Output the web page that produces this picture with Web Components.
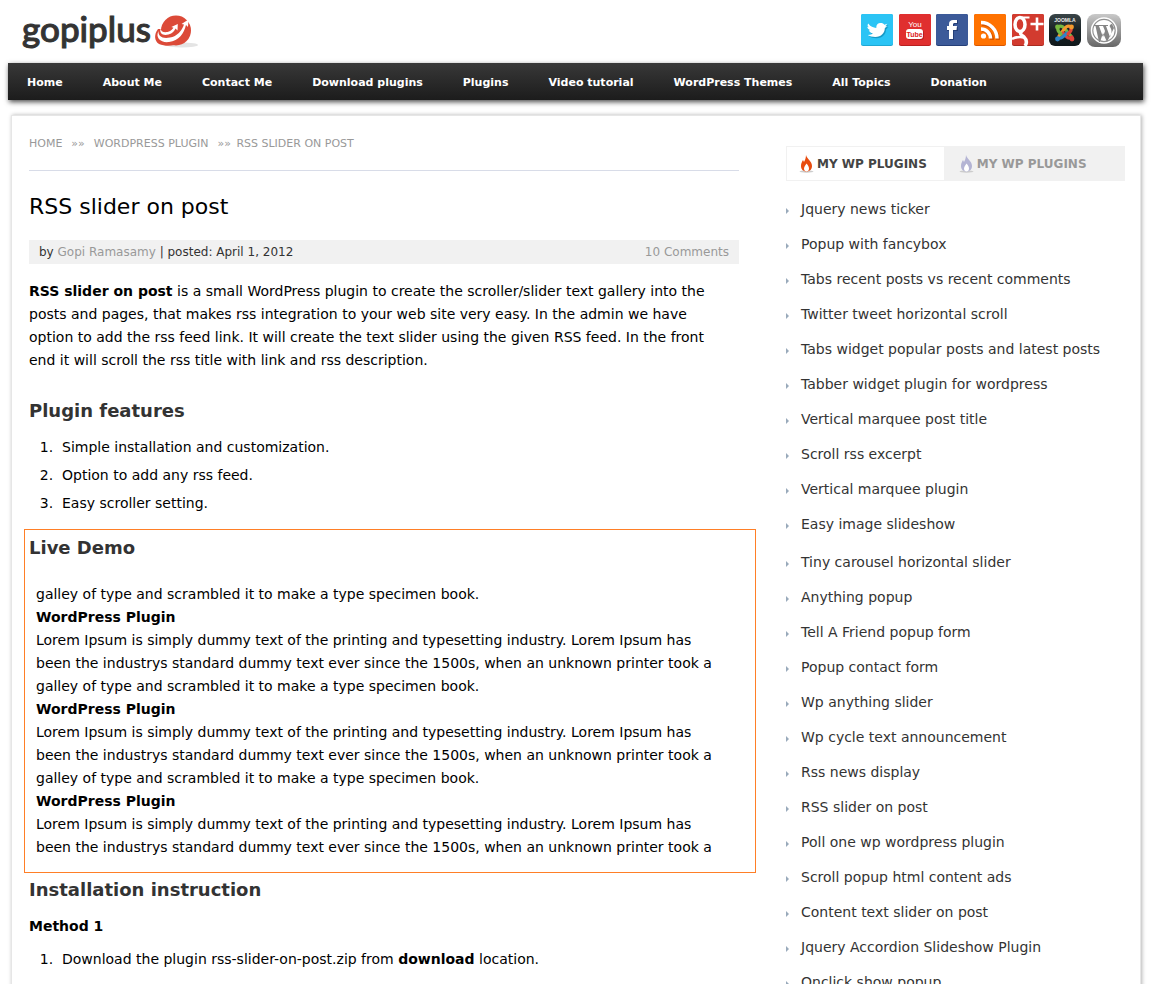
<!DOCTYPE html>
<html lang="en">
<head>
<meta charset="utf-8">
<title>RSS slider on post</title>
<style>
html{height:100%;overflow:hidden;background:#fff}
body{margin:0;height:100%;overflow:hidden;color:#000;font:14px/23px "DejaVu Sans",Verdana,sans-serif}
</style>
</head>
<body>
<gopi-page>
  <gopi-header slot="header"></gopi-header>
  <gopi-nav slot="nav"></gopi-nav>
  <gopi-article slot="main"></gopi-article>
  <gopi-sidebar slot="side"></gopi-sidebar>
</gopi-page>
<script>
function define(name, html) {
  const t = document.createElement('template');
  t.innerHTML = html;
  customElements.define(name, class extends HTMLElement {
    constructor() {
      super();
      this.attachShadow({mode: 'open'}).append(t.content.cloneNode(true));
      if (this.shadowRoot.querySelector('[data-items]')) this.fill();
    }
    fill() {
      for (const ul of this.shadowRoot.querySelectorAll('[data-items]')) {
        for (const s of ul.dataset.items.split('|')) {
          const li = document.createElement('li');
          const a = document.createElement('a');
          a.href = '#';
          a.textContent = s;
          li.append(a);
          ul.append(li);
        }
      }
    }
  });
}

define('gopi-page', `
<style>
:host{display:block;padding:0 10px 0 8px}
.card{margin:15px 2px 0 3px;min-height:900px;padding:0 15px 0 17px;border:1px solid #e6e6e6;border-bottom:0;box-shadow:1px 0 4px rgba(0,0,0,.3);
  display:grid;grid-template-columns:minmax(0,1fr) 339px;gap:47px;align-items:start;background:#fff}
</style>
<slot name="header"></slot><slot name="nav"></slot>
<div class="card"><slot name="main"></slot><slot name="side"></slot></div>`);

define('gopi-header', `
<style>
:host{display:flex;justify-content:space-between;align-items:flex-start;height:63px;box-sizing:border-box;padding:12px 22px 0 14px}
.logo{display:flex;align-items:flex-start;color:#333;text-decoration:none;font:500 35px/32px Lato,sans-serif;-webkit-text-stroke:1px #333}
.logo svg{display:block;margin-left:3px}
nav{display:flex;justify-content:space-between;width:260px;padding-top:2px}
nav a,nav svg{display:block}
</style>
<a class="logo" href="#"><span>gopiplus</span><svg width="46" height="38" viewBox="0 0 46 38">
<ellipse cx="28" cy="33" rx="16" ry="2.4" fill="#e4e4e4"/>
<circle cx="22" cy="18.500" r="15" fill="#dc4a38"/>
<path d="M4 17C0 22 0 29 5 32c7 3 15 2 21-1L9 17z" fill="#dc4a38"/>
<path d="M4.500 19C1 26 7 31 15 30c10-1 15-9 17-17l2 2 .5-7.500-7 4.500 2.500.5c-2 6-7 12-14 13C8 27 4 24 4.500 19z" fill="#fff"/>
<path d="M6.500 16c-1.500 6 3 8 8 6.500 4-1 6-4 7-6l2 2 .3-6.500-6.500 3 2.200.8c-2 3-4 3.800-6 4.200-4 .6-7-.5-7-4z" fill="#fff"/>
</svg></a>
<nav aria-label="Social">
<a href="#" aria-label="Twitter"><svg width="32" height="32" viewBox="0 0 32 32"><rect width="32" height="32" rx="2" fill="#1fa8d4"/><rect width="32" height="31" rx="2" fill="#2bc4f5"/><path id="t" d="M8 9.500c2 3 5 4 8 4.500 0-4 2-5 4.500-5 1.500 0 3 .7 3.500 1.700l3-1-2 2.500 2-.4-2.500 2.500C24.500 19 21 23 15 23c-3 0-6-.8-7.500-2 3 0 4-.8 5-1.700-2 0-3.500-1.500-4-3H10c-2-1-3-2-3-3.500l1.500.5C7 12 7 11 8 9.500z" fill="#1799c5" transform="translate(.5 1.300)"/><path d="M8 9.500c2 3 5 4 8 4.500 0-4 2-5 4.500-5 1.500 0 3 .7 3.500 1.700l3-1-2 2.500 2-.4-2.500 2.500C24.500 19 21 23 15 23c-3 0-6-.8-7.500-2 3 0 4-.8 5-1.700-2 0-3.500-1.500-4-3H10c-2-1-3-2-3-3.500l1.500.5C7 12 7 11 8 9.500z" fill="#fff" transform="translate(-.7 0)"/></svg></a>
<a href="#" aria-label="YouTube"><svg width="32" height="32" viewBox="0 0 32 32"><rect width="32" height="32" rx="2" fill="#b91f1f"/><rect width="32" height="31" rx="2" fill="#e02f2f"/><text x="16" y="13" text-anchor="middle" font-family="Liberation Sans" font-size="8" fill="#fff">You</text><rect x="8" y="16" width="17" height="10" rx="3" fill="#b91f1f"/><rect x="7" y="15" width="17" height="10" rx="3" fill="#fff"/><text x="15.500" y="23" text-anchor="middle" font-family="Liberation Sans" font-size="7" font-weight="700" fill="#d22">Tube</text></svg></a>
<a href="#" aria-label="Facebook"><svg width="32" height="32" viewBox="0 0 32 32"><rect width="32" height="32" rx="2" fill="#253f78"/><rect width="32" height="31" rx="2" fill="#3c5a99"/><path d="M14 26V17h-3v-4h3v-2c0-3 2-5 5-5h3v4h-2c-1.500 0-2 .5-2 1.500V13h4v4h-4v9z" fill="#253f78"/><path d="M13 25V16h-2v-4h2v-2c0-3 2-4 4-4h4v3h-2c-1.500 0-2 .5-2 1.500V12h4l-.5 4H17v9z" fill="#fff"/></svg></a>
<a href="#" aria-label="RSS"><svg width="32" height="32" viewBox="0 0 32 32"><rect width="32" height="32" rx="2" fill="#d95700"/><rect width="32" height="31" rx="2" fill="#ff7200"/><g fill="none" stroke="#d95700" stroke-width="4" transform="translate(1 1)"><path d="M7 15a10 10 0 0 1 10 10M7 9a16 16 0 0 1 16 16"/></g><g fill="none" stroke="#fff" stroke-width="3.500"><path d="M7 15a9.500 9.500 0 0 1 9.500 9.500M7 8.500a16 16 0 0 1 16 16"/></g><circle cx="9.500" cy="22" r="2.600" fill="#fff"/></svg></a>
<a href="#" aria-label="Google Plus"><svg width="32" height="32" viewBox="0 0 32 32"><rect width="32" height="32" rx="2" fill="#aa2b20"/><rect width="32" height="31" rx="2" fill="#d23b2f"/><g fill="none" stroke="#fff"><ellipse cx="8" cy="10.500" rx="5" ry="7" stroke-width="3.500"/><path d="M8 3.500h9.500" stroke-width="2"/><path d="M9 17.500c-2 3 1 3.500 3 5.500 3 3 3 6 1 9" stroke-width="3.500"/><path d="M0 25c4-2 8-2.500 12-1.500" stroke-width="2.500"/><path d="M25 3.500v13M18.500 10h13" stroke-width="2.600"/></g></svg></a>
<a href="#" aria-label="Joomla"><svg width="32" height="32" viewBox="0 0 32 32"><defs><linearGradient id="j" x2="0" y2="1"><stop stop-color="#3a4548"/><stop offset=".5" stop-color="#182124"/><stop offset="1" stop-color="#10181b"/></linearGradient></defs><rect width="32" height="32" rx="6" fill="url(#j)"/><text x="16" y="8" text-anchor="middle" font-family="Liberation Sans" font-size="5" font-weight="700" fill="#eee">JOOMLA</text><g fill="none" stroke-width="3.200" stroke-linecap="round"><path d="M9 13c4-3 6 1 13 9" stroke="#76b83f"/><path d="M22 13c-4-3-6 1-12 9" stroke="#f39a2d"/><path d="M23 23c-4 3-6-1-9-4" stroke="#e0453a"/><path d="M9 24c3 1 5-1 9-5" stroke="#2f84c8"/><path d="M9 14c-1 3 1 4 3 6" stroke="#76b83f"/><path d="M22 14c1 3-1 4-3 6" stroke="#e0453a"/></g><circle cx="8.500" cy="13" r="2.400" fill="#76b83f"/><circle cx="22.500" cy="13" r="2.400" fill="#f39a2d"/><circle cx="8.500" cy="25" r="2.400" fill="#2f84c8"/><circle cx="23" cy="25" r="2.400" fill="#e0453a"/></svg></a>
<a href="#" aria-label="WordPress"><svg width="34" height="33" viewBox="0 0 34 33"><defs><linearGradient id="w" x2="0" y2="1"><stop stop-color="#c9c9c9"/><stop offset="1" stop-color="#666"/></linearGradient></defs><rect width="34" height="33" rx="8" fill="url(#w)"/><circle cx="17" cy="16.500" r="12.500" fill="#909090" stroke="#fff" stroke-width="1.500"/><circle cx="17" cy="16.500" r="10.600" fill="#fff"/><path d="M7 11h7v1h-2l4 11 2-6-2-5h-2v-1h7v1h-2l4 11c2-5 2-7 0-10-1-2 1-3 2-3l2 4-7 14-4-9-3 9h-1L8.500 12H7z" fill="#858585"/></svg></a>
</nav>`);

define('gopi-nav', `
<style>
:host{display:block;background:linear-gradient(#383838,#1c1c1c);box-shadow:1px 2px 5px rgba(0,0,0,.7)}
ul{display:flex;gap:40px;margin:0;padding:2px 19px 0;list-style:none;height:35px;align-items:center}
a{display:block;color:#fff;text-decoration:none;font-weight:700;font-size:11px;white-space:nowrap}
</style>
<nav><ul data-items="Home|About Me|Contact Me|Download plugins|Plugins|Video tutorial|WordPress Themes|All Topics|Donation"></ul></nav>`);

define('gopi-article', `
<style>
:host{display:block;min-width:0}
a{color:#999;text-decoration:none}
.crumbs{display:flex;gap:2px;height:54px;align-items:center;border-bottom:1px solid #d8dce8;font-size:11px;color:#999;text-transform:uppercase;white-space:pre}
h1{margin:24px 0 21px;font-weight:400;font-size:22px;line-height:24px}
.meta{display:flex;justify-content:space-between;padding:1px 10px 0;background:#f1f1f1;font-size:12px;color:#333}
p{margin:0}
.intro{margin:16px 16px 27px 0}
h2{margin:0;font-size:18px;line-height:24px;color:#333}
h3{margin:12px 0 7px;font-size:14px;line-height:24px}
ol{margin:0;padding:0 0 0 33px;line-height:28px}
li::marker{content:counter(list-item) ".\\00a0\\00a0"}
.features{margin:10px 0 12px}
</style>
<div class="crumbs"><a href="#">Home</a><span>  »»  </span><a href="#">WordPress Plugin</a><span>  »» </span><span>RSS slider on post</span></div>
<h1>RSS slider on post</h1>
<div class="meta"><span>by <a href="#">Gopi Ramasamy</a> | posted: April 1, 2012</span><a href="#">10 Comments</a></div>
<p class="intro"><b>RSS slider on post</b> is a small WordPress plugin to create the scroller/slider text gallery into the posts and pages, that makes rss integration to your web site very easy. In the admin we have option to add the rss feed link. It will create the text slider using the given RSS feed. In the front end it will scroll the rss title with link and rss description.</p>
<h2>Plugin features</h2>
<ol class="features"><li>Simple installation and customization.</li><li>Option to add any rss feed.</li><li>Easy scroller setting.</li></ol>
<gopi-demo><h2>Live Demo</h2></gopi-demo>
<h2>Installation instruction</h2>
<h3>Method 1</h3>
<ol><li>Download the plugin rss-slider-on-post.zip from <b>download</b> location.</li></ol>`);

define('gopi-demo', `
<style>
:host{display:block;border:1px solid #ff7f27;margin:0 -17px 5px -5px;padding:6px 4px 13px}
.feed{padding:23px 24px 0 7px}
p{margin:0}
</style>
<slot></slot>
<div class="feed">
<p>galley of type and scrambled it to make a type specimen book.</p>
<b>WordPress Plugin</b>
<p>Lorem Ipsum is simply dummy text of the printing and typesetting industry. Lorem Ipsum has been the industrys standard dummy text ever since the 1500s, when an unknown printer took a galley of type and scrambled it to make a type specimen book.</p>
<b>WordPress Plugin</b>
<p>Lorem Ipsum is simply dummy text of the printing and typesetting industry. Lorem Ipsum has been the industrys standard dummy text ever since the 1500s, when an unknown printer took a galley of type and scrambled it to make a type specimen book.</p>
<b>WordPress Plugin</b>
<p>Lorem Ipsum is simply dummy text of the printing and typesetting industry. Lorem Ipsum has been the industrys standard dummy text ever since the 1500s, when an unknown printer took a</p>
</div>`);

define('gopi-flame', `
<style>:host{display:block;color:#e84c0f}svg{display:block}</style>
<svg width="16" height="18" viewBox="0 0 16 18"><ellipse cx="7.500" cy="16.500" rx="7" ry="1.200" fill="#ccc"/><path d="M7 0c1 4 6 6 6 11 0 3-2 5.500-5.500 5.500S2 14 2 11c0-3 1-4 2-6l1 2c1-2 2-4 2-7z" fill="currentColor"/><path d="M7.500 8.500c1.500 2 2.500 3 2.500 5s-1 3-2.500 3S5 15.500 5 13.500s1.500-3 2.500-5z" fill="#fff"/></svg>`);

define('gopi-sidebar', `
<style>
:host{display:block;padding-top:30px}
.tabs{display:flex;border:1px solid #f1f1f1;background:#f1f1f1;height:33px}
button{display:flex;align-items:center;gap:2px;border:0;margin:0;padding:0 17px 0 12px;background:#fff;color:#444;font:bold 12px/20px "DejaVu Sans",Verdana,sans-serif}
button.off{background:none;color:#999;padding-left:15px}
.off gopi-flame{color:#b4b4d4}
ul{list-style:none;margin:11px 0 0;padding:0}
ul+ul{margin-top:3px}
li{display:flex;align-items:center;gap:12px;height:35px}
li::before{content:"";border:solid transparent;border-width:3px 0 3px 3px;border-left-color:#9ab;margin-top:2px}
a{color:#333;text-decoration:none;white-space:nowrap}
</style>
<div class="tabs"><button type="button"><gopi-flame></gopi-flame>MY WP PLUGINS</button><button type="button" class="off"><gopi-flame></gopi-flame>MY WP PLUGINS</button></div>
<ul data-items="Jquery news ticker|Popup with fancybox|Tabs recent posts vs recent comments|Twitter tweet horizontal scroll|Tabs widget popular posts and latest posts|Tabber widget plugin for wordpress|Vertical marquee post title|Scroll rss excerpt|Vertical marquee plugin|Easy image slideshow"></ul>
<ul data-items="Tiny carousel horizontal slider|Anything popup|Tell A Friend popup form|Popup contact form|Wp anything slider|Wp cycle text announcement|Rss news display|RSS slider on post|Poll one wp wordpress plugin|Scroll popup html content ads|Content text slider on post|Jquery Accordion Slideshow Plugin|Onclick show popup"></ul>`);
</script>
</body>
</html>
